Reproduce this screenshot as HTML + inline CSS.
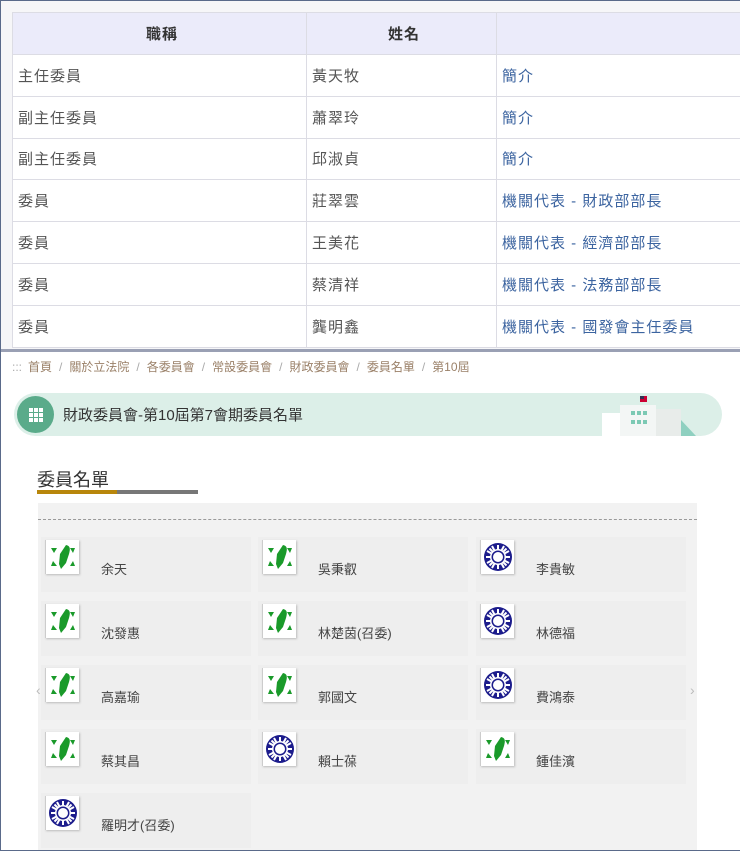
<!DOCTYPE html>
<html><head><meta charset="utf-8"><style>
*{box-sizing:border-box;margin:0;padding:0}
body{width:740px;height:851px;overflow:hidden;background:#fff;font-family:"Liberation Sans","Noto Sans CJK TC",sans-serif;position:relative}
.frame{position:absolute;left:0;top:0;width:740px;height:851px;border:1px solid #5a6a8a;border-right:none;pointer-events:none}
.top{position:absolute;left:0;top:0;width:740px;height:351px;background:#f6f6f8}
table{position:absolute;left:12px;top:12px;border-collapse:collapse;width:740px;background:#fff}
td,th{border:1px solid #dcdce4;height:41.8px;font-size:15px;color:#555;font-weight:normal;padding-left:5px;text-align:left;letter-spacing:1px}
th{background:#ebebfa;text-align:center;color:#333;height:42px;font-weight:bold}
td a{color:#3c64a0;text-decoration:none}
.sep{position:absolute;left:0;top:349px;width:740px;height:3px;background:#9aa0b4}
.bc{position:absolute;left:12px;top:358px;font-size:12px;color:#9a8068}
.bc span{color:#aaa;margin:0 7px}
.banner{position:absolute;left:14px;top:393px;width:708px;height:43px;background:#dcefe8;border-radius:22px}
.circ{position:absolute;left:3px;top:3px;width:37px;height:37px;border-radius:50%;background:#5aab8a}
.btitle{position:absolute;left:49px;top:11px;font-size:15px;color:#333}
h2{position:absolute;left:37px;top:466px;font-size:18px;font-weight:normal;color:#333}
.ul1{position:absolute;left:37px;top:490px;width:80px;height:4px;background:#b8860b}
.ul2{position:absolute;left:117px;top:490px;width:81px;height:4px;background:#777}
.panel{position:absolute;left:38px;top:503px;width:659px;height:348px;background:#f2f2f2}
.dash{position:absolute;left:38px;top:519px;width:659px;border-top:1px dashed #999}
.card{position:absolute;width:210px;height:55px;background:#eee}
.ic{position:absolute;left:4px;top:3px;width:34px;height:34px;background:#fff;box-shadow:1px 1px 2px #bbb;border-left:1px solid #ccc}
.nm{position:absolute;left:60px;top:22px;font-size:13px;color:#444}
.chev{position:absolute;top:682px;color:#bbb;font-size:14px}
</style></head><body>
<div class="top"></div>
<table>
<tr><th style="width:294px">職稱</th><th style="width:190px">姓名</th><th></th></tr>
<tr><td>主任委員</td><td>黃天牧</td><td><a>簡介</a></td></tr>
<tr><td>副主任委員</td><td>蕭翠玲</td><td><a>簡介</a></td></tr>
<tr><td>副主任委員</td><td>邱淑貞</td><td><a>簡介</a></td></tr>
<tr><td>委員</td><td>莊翠雲</td><td><a>機關代表 - 財政部部長</a></td></tr>
<tr><td>委員</td><td>王美花</td><td><a>機關代表 - 經濟部部長</a></td></tr>
<tr><td>委員</td><td>蔡清祥</td><td><a>機關代表 - 法務部部長</a></td></tr>
<tr><td>委員</td><td>龔明鑫</td><td><a>機關代表 - 國發會主任委員</a></td></tr>
</table>
<div class="sep"></div>
<div class="bc"><span style="margin:0 6px 0 0">:::</span>首頁<span>/</span>關於立法院<span>/</span>各委員會<span>/</span>常設委員會<span>/</span>財政委員會<span>/</span>委員名單<span>/</span>第10屆</div>
<div class="banner"><div class="circ"><svg width="37" height="37"><g fill="#fff"><rect x="12" y="12" width="4" height="4"/><rect x="17" y="12" width="4" height="4"/><rect x="22" y="12" width="4" height="4"/><rect x="12" y="17" width="4" height="4"/><rect x="17" y="17" width="4" height="4"/><rect x="22" y="17" width="4" height="4"/><rect x="12" y="22" width="4" height="4"/><rect x="17" y="22" width="4" height="4"/><rect x="22" y="22" width="4" height="4"/></g></svg></div>
<div class="btitle">財政委員會-第10屆第7會期委員名單</div>
<svg style="position:absolute;left:588px;top:0" width="110" height="43"><rect x="0" y="20" width="20" height="23" fill="#fff"/><rect x="18" y="12" width="36" height="31" fill="#f3f6f5"/><rect x="38" y="3" width="7" height="6" fill="#c03"/><rect x="38" y="3" width="4" height="3" fill="#335"/><g fill="#7cc9b4"><rect x="29" y="18" width="4" height="4"/><rect x="35" y="18" width="4" height="4"/><rect x="41" y="18" width="4" height="4"/><rect x="29" y="27" width="4" height="4"/><rect x="35" y="27" width="4" height="4"/><rect x="41" y="27" width="4" height="4"/></g><rect x="54" y="16" width="25" height="27" fill="#e8ecea"/><polygon points="79,27 94,43 79,43" fill="#8fd0c0"/></svg>
</div>
<h2>委員名單</h2><div class="ul1"></div><div class="ul2"></div>
<div class="panel"></div><div class="dash"></div>
<div class="chev" style="left:36px">‹</div><div class="chev" style="left:690px">›</div>
<svg width="0" height="0" style="position:absolute"><defs>
<g id="d"><rect width="34" height="34" fill="#fff"/><g fill="#1a9a2a"><path d="M20 5 C25 6 24 10 23 14 L20 23 L15 29 L13 24 L14 14 Z"/><path d="M5 8 L11 8 L8 13Z"/><path d="M29 8 L24 8 L27 13Z"/><path d="M5 26 L11 26 L7 21Z"/><path d="M29 26 L24 26 L27 21Z"/></g></g>
<g id="k"><rect width="34" height="34" fill="#fff"/><circle cx="17" cy="17" r="14" fill="#1c1c8c"/><g stroke="#fff" stroke-width="2"><path d="M17 5V29M5 17H29M8.5 8.5L25.5 25.5M25.5 8.5L8.5 25.5M11 6L23 28M23 6L11 28M6 11L28 23M28 11L6 23"/></g><circle cx="17" cy="17" r="8" fill="#fff"/><circle cx="17" cy="17" r="6.5" fill="#1c1c8c"/><circle cx="17" cy="17" r="5" fill="#fff"/></g>
</defs></svg>
<div class="card" style="left:41px;top:537px"><svg class="ic"><use href="#d"/></svg><div class="nm">余天</div></div>
<div class="card" style="left:258px;top:537px"><svg class="ic"><use href="#d"/></svg><div class="nm">吳秉叡</div></div>
<div class="card" style="left:476px;top:537px"><svg class="ic"><use href="#k"/></svg><div class="nm">李貴敏</div></div>
<div class="card" style="left:41px;top:601px"><svg class="ic"><use href="#d"/></svg><div class="nm">沈發惠</div></div>
<div class="card" style="left:258px;top:601px"><svg class="ic"><use href="#d"/></svg><div class="nm">林楚茵(召委)</div></div>
<div class="card" style="left:476px;top:601px"><svg class="ic"><use href="#k"/></svg><div class="nm">林德福</div></div>
<div class="card" style="left:41px;top:665px"><svg class="ic"><use href="#d"/></svg><div class="nm">高嘉瑜</div></div>
<div class="card" style="left:258px;top:665px"><svg class="ic"><use href="#d"/></svg><div class="nm">郭國文</div></div>
<div class="card" style="left:476px;top:665px"><svg class="ic"><use href="#k"/></svg><div class="nm">費鴻泰</div></div>
<div class="card" style="left:41px;top:729px"><svg class="ic"><use href="#d"/></svg><div class="nm">蔡其昌</div></div>
<div class="card" style="left:258px;top:729px"><svg class="ic"><use href="#k"/></svg><div class="nm">賴士葆</div></div>
<div class="card" style="left:476px;top:729px"><svg class="ic"><use href="#d"/></svg><div class="nm">鍾佳濱</div></div>
<div class="card" style="left:41px;top:793px"><svg class="ic"><use href="#k"/></svg><div class="nm">羅明才(召委)</div></div>
<div class="frame"></div>
</body></html>
